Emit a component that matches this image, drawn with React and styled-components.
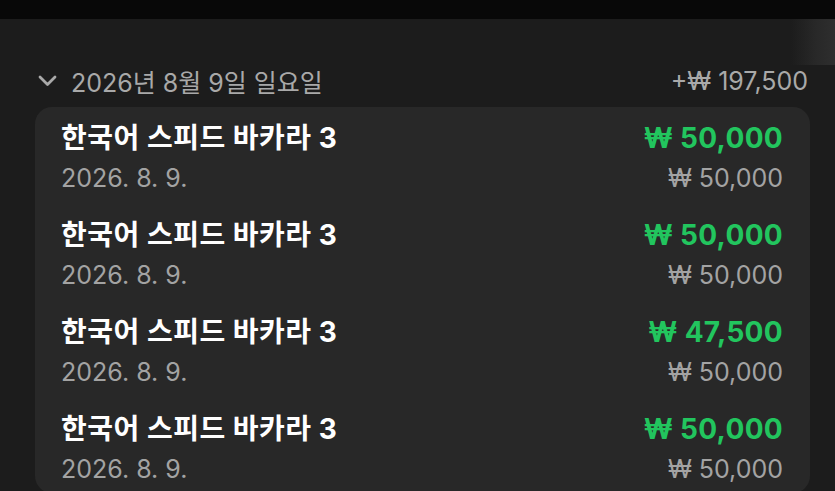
import styled, { createGlobalStyle } from "styled-components";

const GlobalStyle = createGlobalStyle`
  html, body {
    margin: 0;
    padding: 0;
    background: #1c1c1c;
    overflow: hidden;
  }
  body {
    font-family: Inter, "Noto Sans CJK KR", sans-serif;
  }
`;

const Page = styled.div`
  width: 835px;
  height: 491px;
  background: #1c1c1c;
  overflow: hidden;
`;

const TopBar = styled.div`
  height: 19px;
  background: #080808;
`;

const Shelf = styled.div`
  height: 46px;
  display: flex;
  justify-content: flex-end;
`;

const Fade = styled.div`
  width: 44px;
  background: linear-gradient(90deg, #1c1c1c 0%, #282828 55%, #2e2e2e 100%);
`;

const Section = styled.section`
  padding: 0 25px 0 35px;
`;

const DayHeader = styled.div`
  height: 32px;
  display: flex;
  align-items: center;
  justify-content: space-between;
  padding: 0 2px 0 3px;
  margin-bottom: 10px;
  color: #a9a9a9;
  font-size: 25px;
`;

const DayLabel = styled.div`
  display: flex;
  align-items: center;
  gap: 14px;
`;

const Card = styled.div`
  background: #282828;
  border-radius: 17px;
  padding: 3px 0 0;
`;

const Row = styled.div`
  display: flex;
  justify-content: space-between;
  padding: 10px 27px 11px 26px;

  &:last-child {
    padding-bottom: 6px;
  }
`;

const Col = styled.div`
  display: flex;
  flex-direction: column;
  gap: 4px;
  align-items: ${(p) => (p.$right ? "flex-end" : "flex-start")};
`;

const Title = styled.div`
  height: 36px;
  line-height: 36px;
  font-size: 28px;
  font-weight: 700;
  color: #ffffff;
  letter-spacing: 0.5px;
`;

const Sub = styled.div`
  height: 36px;
  line-height: 36px;
  font-size: 25px;
  color: #a3a3a3;
`;

const Amount = styled.div`
  height: 36px;
  line-height: 36px;
  font-size: 28px;
  font-weight: 700;
  color: #22c55e;
  letter-spacing: 0.3px;
`;

const Chevron = () => (
  <svg width="19" height="12" viewBox="0 0 19 12" fill="none">
    <path d="M2 2 L9.5 9.5 L17 2" stroke="#a9a9a9" strokeWidth="2.8" strokeLinecap="round" strokeLinejoin="round" />
  </svg>
);

const rows = [
  { name: "한국어 스피드 바카라 3", date: "2026. 8. 9.", win: "₩ 50,000", bet: "₩ 50,000" },
  { name: "한국어 스피드 바카라 3", date: "2026. 8. 9.", win: "₩ 50,000", bet: "₩ 50,000" },
  { name: "한국어 스피드 바카라 3", date: "2026. 8. 9.", win: "₩ 47,500", bet: "₩ 50,000" },
  { name: "한국어 스피드 바카라 3", date: "2026. 8. 9.", win: "₩ 50,000", bet: "₩ 50,000" },
];

export default function App() {
  return (
    <Page>
      <GlobalStyle />
      <TopBar />
      <Shelf>
        <Fade />
      </Shelf>
      <Section>
        <DayHeader>
          <DayLabel>
            <Chevron />
            <span>2026년 8월 9일 일요일</span>
          </DayLabel>
          <span>+₩ 197,500</span>
        </DayHeader>
        <Card>
          {rows.map((r, i) => (
            <Row key={i}>
              <Col>
                <Title>{r.name}</Title>
                <Sub>{r.date}</Sub>
              </Col>
              <Col $right>
                <Amount>{r.win}</Amount>
                <Sub>{r.bet}</Sub>
              </Col>
            </Row>
          ))}
        </Card>
      </Section>
    </Page>
  );
}
